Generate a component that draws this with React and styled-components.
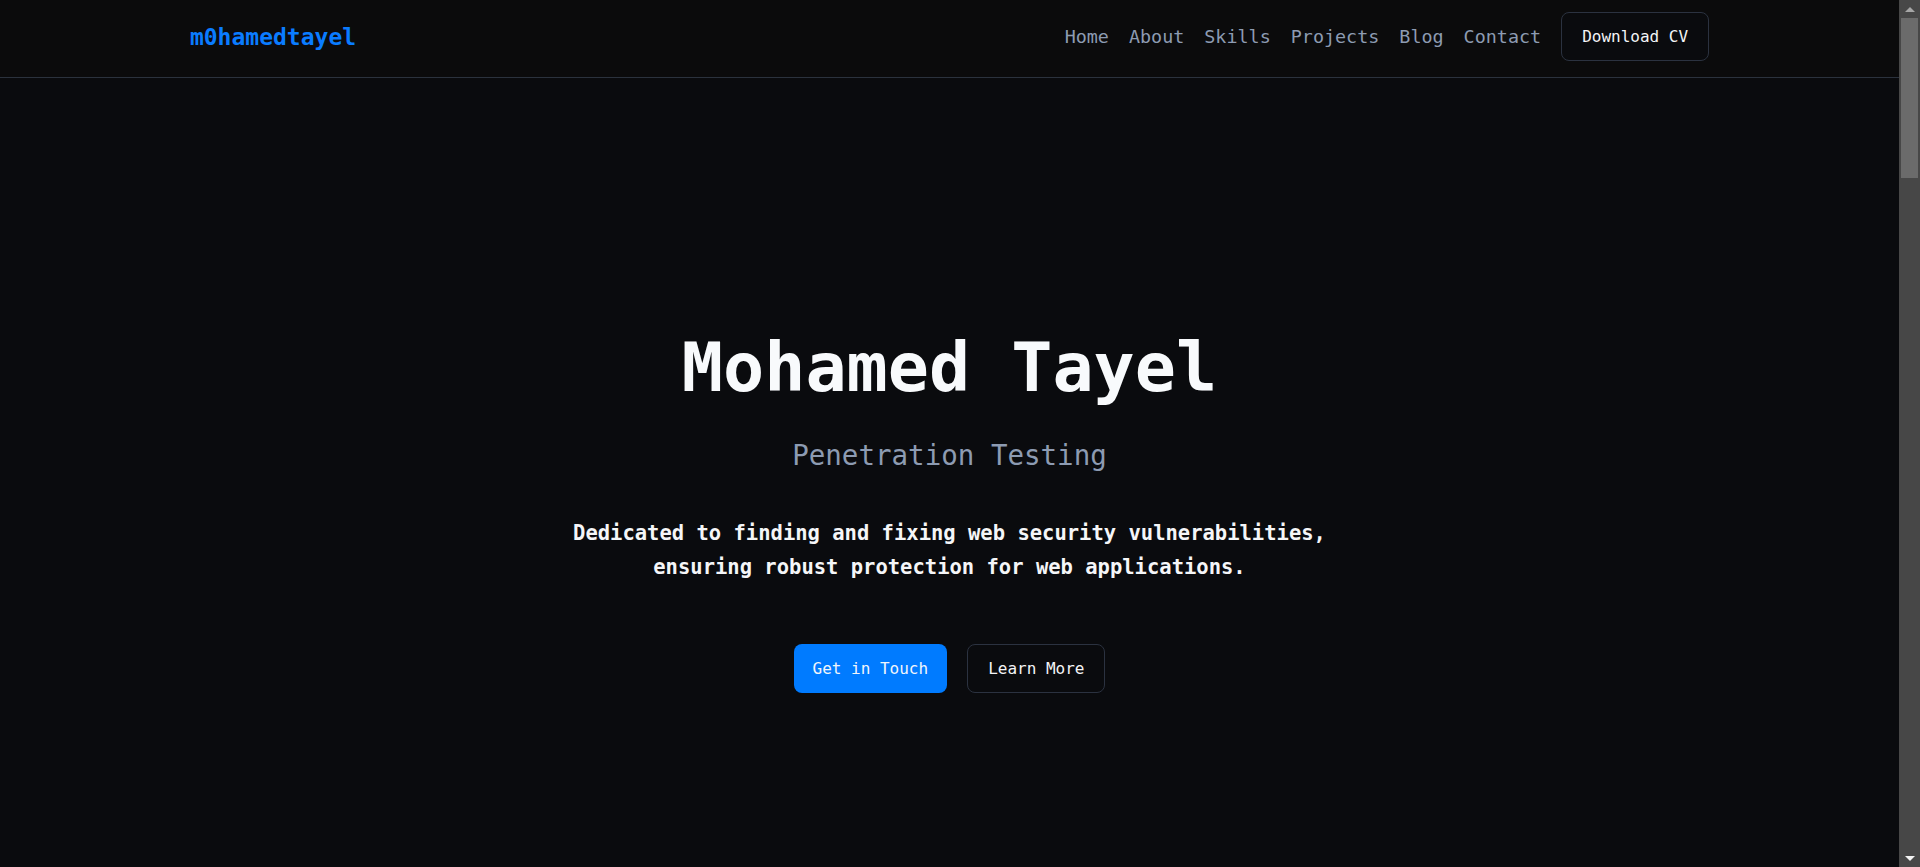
import React from "react";
import styled, { createGlobalStyle } from "styled-components";

const Global = createGlobalStyle`
  html { color-scheme: dark; }
  * { box-sizing: border-box; }
  body {
    margin: 0;
    background: #0a0b0e;
    color: #f8fafc;
    font-family: "DejaVu Sans Mono", "Liberation Mono", monospace;
    overflow: hidden;
  }
  a { text-decoration: none; }
`;

const Shell = styled.div`
  display: flex;
  height: 100vh;
`;

const Page = styled.div`
  flex: 1;
  min-width: 0;
  overflow-y: auto;
  scrollbar-width: none;
  &::-webkit-scrollbar { display: none; }
`;

const Rail = styled.aside`
  flex: 0 0 21px;
  display: flex;
  flex-direction: column;
  align-items: center;
  background: #474747;
`;

const RailArrow = styled.div`
  flex: 0 0 18px;
  display: flex;
  align-items: center;
  justify-content: center;
  &::before {
    content: "";
    width: 0;
    height: 0;
    border-left: 5px solid transparent;
    border-right: 5px solid transparent;
    ${(p) =>
      p.$down
        ? "border-top: 5px solid #f2f2f2;"
        : "border-bottom: 5px solid #a6a6a6;"}
  }
`;

const RailTrack = styled.div`
  flex: 1;
  width: 100%;
  display: flex;
  justify-content: center;
`;

const RailThumb = styled.div`
  width: 17px;
  height: 160px;
  background: #6b6b6b;
`;

const Header = styled.header`
  background: #0b0b0c;
  border-bottom: 1px solid #2b323d;
  padding: 12px 0 16px;
`;

const HeaderInner = styled.div`
  width: 80%;
  margin: 0 auto;
  display: flex;
  align-items: center;
  justify-content: space-between;
`;

const Logo = styled.a`
  color: #0a7cff;
  font-weight: 700;
  font-size: 23px;
`;

const Nav = styled.nav`
  display: flex;
  align-items: center;
  gap: 20px;
`;

const NavLink = styled.a`
  color: #8d9bb2;
  font-size: 18.4px;
`;

const Button = styled.a`
  display: inline-flex;
  align-items: center;
  justify-content: center;
  font-size: 16px;
  line-height: 19px;
  padding: ${(p) => (p.$primary ? "15px 19px" : "14px 20px")};
  border-radius: 8px;
  border: ${(p) => (p.$primary ? "none" : "1px solid #2b3240")};
  background: ${(p) => (p.$primary ? "#007bff" : "#0a0b0e")};
  color: ${(p) => (p.$primary ? "#f1f5fb" : "#f3f4f6")};
`;

const Hero = styled.section`
  display: flex;
  flex-direction: column;
  align-items: center;
  text-align: center;
  padding: 249px 20px 0;
  min-height: 789px;
`;

const Title = styled.h1`
  margin: 0;
  font-size: 68.4px;
  line-height: 82.8px;
  font-weight: 700;
  color: #f8fafc;
`;

const Subtitle = styled.h2`
  margin: 29px 0 0;
  font-size: 27.5px;
  line-height: 33px;
  font-weight: 400;
  color: #8d9bb2;
`;

const Description = styled.p`
  margin: 44px 0 0;
  max-width: 820px;
  font-size: 20.5px;
  line-height: 34px;
  font-weight: 700;
  color: #f5f6f8;
`;

const Actions = styled.div`
  display: flex;
  gap: 20px;
  margin-top: 60px;
`;

const links = ["Home", "About", "Skills", "Projects", "Blog", "Contact"];

export default function App() {
  return (
    <>
      <Global />
      <Shell>
        <Page>
          <Header>
            <HeaderInner>
              <Logo href="#home">m0hamedtayel</Logo>
              <Nav>
                {links.map((l) => (
                  <NavLink key={l} href={`#${l.toLowerCase()}`}>
                    {l}
                  </NavLink>
                ))}
                <Button href="#cv">Download CV</Button>
              </Nav>
            </HeaderInner>
          </Header>
          <main>
            <Hero id="home">
              <Title>Mohamed Tayel</Title>
              <Subtitle>Penetration Testing</Subtitle>
              <Description>
                Dedicated to finding and fixing web security vulnerabilities,
                ensuring robust protection for web applications.
              </Description>
              <Actions>
                <Button $primary href="#contact">Get in Touch</Button>
                <Button href="#about">Learn More</Button>
              </Actions>
            </Hero>
          </main>
        </Page>
        <Rail aria-hidden="true">
          <RailArrow />
          <RailTrack>
            <RailThumb />
          </RailTrack>
          <RailArrow $down />
        </Rail>
      </Shell>
    </>
  );
}
